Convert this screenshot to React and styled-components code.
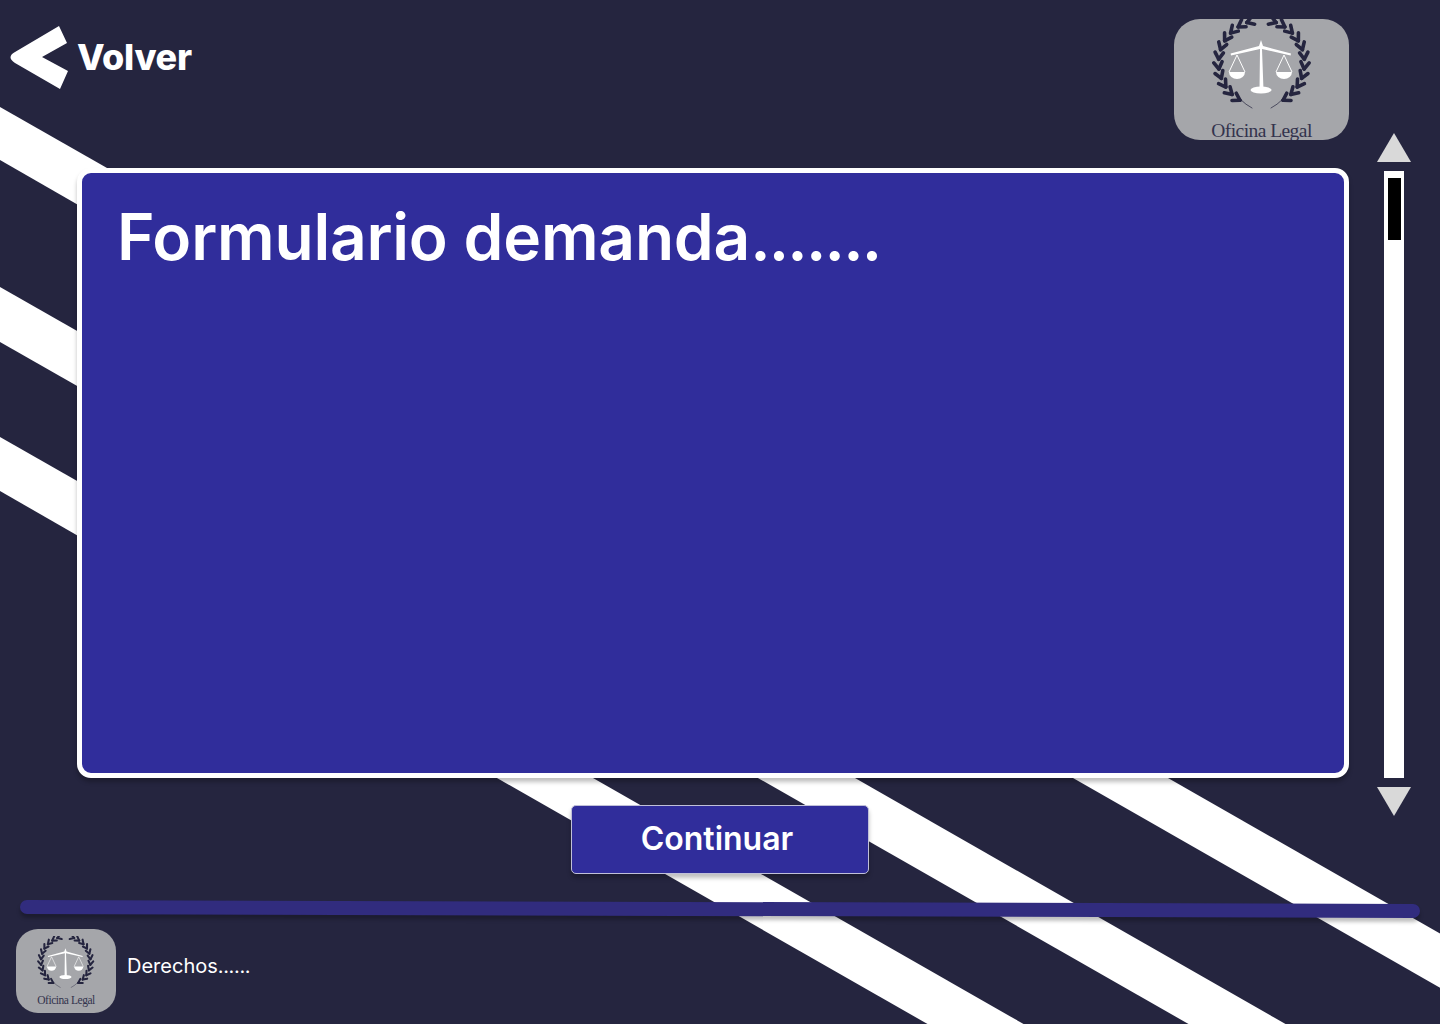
import styled, { createGlobalStyle } from 'styled-components'

const GlobalStyle = createGlobalStyle`
  * {
    box-sizing: border-box;
    margin: 0;
    padding: 0;
  }

  body {
    background: #25253f;
    font-family: Inter, "Liberation Sans", sans-serif;
    color: #fff;
  }
`

const Page = styled.div`
  position: relative;
  width: 1440px;
  height: 1024px;
  overflow: hidden;
  background: #25253f;
`

const Stripes = styled.svg`
  position: absolute;
  inset: 0;
  width: 1440px;
  height: 1024px;
`

const Content = styled.div`
  position: relative;
  display: flex;
  flex-direction: column;
`

const MainRow = styled.div`
  display: flex;
`

const LeftColumn = styled.div`
  width: 1349px;
  display: flex;
  flex-direction: column;
`

const TopBar = styled.header`
  height: 168px;
  padding-top: 19px;
  padding-left: 10px;
  display: flex;
  justify-content: space-between;
  align-items: flex-start;
`

const BackLink = styled.a`
  margin-top: 6px;
  display: flex;
  align-items: center;
  gap: 9px;
  color: #fff;
  cursor: pointer;
`

const BackLabel = styled.span`
  font-size: 36px;
  font-weight: 800;
  line-height: 44px;
  letter-spacing: -0.3px;
`

const LogoCard = styled.div`
  width: ${(p) => (p.$small ? '100px' : '175px')};
  height: ${(p) => (p.$small ? '84px' : '121px')};
  padding-top: ${(p) => (p.$small ? '7px' : '0')};
  border-radius: ${(p) => (p.$small ? '22px' : '26px')};
  background: #a5a6aa;
  display: flex;
  flex-direction: column;
  align-items: center;
  overflow: hidden;
  flex-shrink: 0;
`

const LogoEmblem = styled.svg`
  width: ${(p) => (p.$small ? '58px' : '100px')};
  height: ${(p) => (p.$small ? '52px' : '90px')};
  flex-shrink: 0;
`

const LogoText = styled.span`
  margin-top: ${(p) => (p.$small ? '7px' : '12px')};
  font-family: "Liberation Serif", serif;
  font-size: ${(p) => (p.$small ? '11.5px' : '19.5px')};
  letter-spacing: ${(p) => (p.$small ? '-0.45px' : '-0.55px')};
  line-height: 1;
  white-space: nowrap;
  color: #33334d;
`

const Panel = styled.section`
  margin-left: 77px;
  width: 1272px;
  height: 610px;
  padding: 25px 35px;
  background: #302d9b;
  border: 5px solid #fff;
  border-radius: 14px;
  box-shadow: 0 4px 4px rgba(0, 0, 0, 0.25);
`

const Title = styled.h1`
  font-size: 64px;
  font-weight: 600;
  line-height: 77px;
  letter-spacing: -0.2px;
`

const Dots = styled.span`
  letter-spacing: ${(p) => p.$spacing};
`

const ButtonRow = styled.div`
  padding-left: 571px;
  margin-top: 27px;
`

const ContinueButton = styled.button`
  width: 298px;
  height: 69px;
  padding-right: 6px;
  padding-bottom: 2px;
  background: #302d9b;
  border: 1px solid #c0c0d8;
  border-radius: 5px;
  box-shadow: 0 4px 4px rgba(0, 0, 0, 0.25);
  color: #fff;
  font-family: inherit;
  font-size: 32px;
  font-weight: 600;
  cursor: pointer;
`

const Scroller = styled.div`
  margin-top: 133px;
  margin-left: 28px;
  width: 34px;
  display: flex;
  flex-direction: column;
  align-items: center;
`

const Arrow = styled.button`
  width: 34px;
  height: 29px;
  border: none;
  background: #d9d9d9;
  clip-path: ${(p) =>
    p.$down ? 'polygon(0 0, 100% 0, 50% 100%)' : 'polygon(50% 0, 100% 100%, 0 100%)'};
`

const Track = styled.div`
  width: 20px;
  height: 607px;
  margin: 9px 0;
  padding: 7px 3px 0 4px;
  background: #fff;
`

const Thumb = styled.div`
  height: 62px;
  background: #000;
`

const Divider = styled.div`
  margin: 28px 20px 0;
  height: 14px;
  border-radius: 8px;
  background: #312c7e;
  box-shadow: 0 4px 4px rgba(0, 0, 0, 0.25);
  transform: rotate(0.164deg);
`

const Footer = styled.footer`
  margin-top: 13px;
  padding-left: 16px;
  display: flex;
  align-items: center;
  gap: 11px;
`

const FooterText = styled.p`
  margin-bottom: 10px;
  font-size: 20px;
  line-height: 24px;
`

const stripes = [
  '0,107 200,221 200,275 0,160',
  '0,287 200,401 200,456 0,342',
  '0,437 200,551 200,606 0,491',
  '483,770 579,770 1034,1030 938,1030',
  '744,770 841,770 1296,1030 1199,1030',
  '1059,770 1154,770 1609,1030 1514,1030',
]

// laurel branch: pairs of leaves along an arc round the scale
const leaves = Array.from({ length: 11 }, (_, i) => {
  const rad = ((150 - i * 13) * Math.PI) / 180
  const x = 49.5 - 43 * Math.sin(rad)
  const y = 44 - 43 * Math.cos(rad)
  const tx = Math.cos(rad)
  const ty = -Math.sin(rad)
  const ends = [0.55, -0.55].map((a) => [
    x + (tx * Math.cos(a) - ty * Math.sin(a)) * 8,
    y + (tx * Math.sin(a) + ty * Math.cos(a)) * 8,
  ])
  return { x, y, ends }
})

function Branch() {
  return (
    <g stroke="#25253f" strokeLinecap="round" fill="none">
      {leaves.map((leaf, i) => (
        <g key={i} strokeWidth="3.6">
          <line x1={leaf.x} y1={leaf.y} x2={leaf.ends[0][0]} y2={leaf.ends[0][1]} />
          <line x1={leaf.x} y1={leaf.y} x2={leaf.ends[1][0]} y2={leaf.ends[1][1]} />
        </g>
      ))}
      <path d="M28 80 Q34 86 40 89" strokeWidth="0.7" />
    </g>
  )
}

function Logo({ small }) {
  return (
    <LogoCard $small={small}>
      <LogoEmblem $small={small} viewBox="0 0 100 90">
        <Branch />
        <g transform="translate(99 0) scale(-1 1)">
          <Branch />
        </g>
        <g fill="#fff">
          <path d="M47.5 71 L48 30 L19 36.5 L18.6 34.6 L47 27 L49 21 L51 27 L79 34.6 L78.6 36.5 L50 30 L51.5 71 Z" />
          <ellipse cx="49" cy="71" rx="10.5" ry="3.5" />
          <path d="M17 53 H33 A8 7 0 0 1 17 53 Z" />
          <path d="M64 53 H80 A8 7 0 0 1 64 53 Z" />
        </g>
        <g stroke="#fff" strokeWidth="1" fill="none">
          <path d="M17 53 L25 36 L33 53" />
          <path d="M64 53 L72 36 L80 53" />
        </g>
      </LogoEmblem>
      <LogoText $small={small}>Oficina Legal</LogoText>
    </LogoCard>
  )
}

function App() {
  return (
    <>
      <GlobalStyle />
      <Page>
        <Stripes viewBox="0 0 1440 1024">
          {stripes.map((points) => (
            <polygon key={points} points={points} fill="#fff" />
          ))}
        </Stripes>
        <Content>
          <MainRow>
            <LeftColumn>
              <TopBar>
                <BackLink>
                  <svg width="58" height="64" viewBox="10 26 58 64">
                    <path d="M59 27 L67 44 L42 58 L68 72 L60 90 L15 64 Q6 58 15 53 Z" fill="#fff" />
                  </svg>
                  <BackLabel>Volver</BackLabel>
                </BackLink>
                <Logo />
              </TopBar>
              <Panel>
                <Title>
                  Formulario demanda<Dots $spacing="-1.8px">.......</Dots>
                </Title>
              </Panel>
              <ButtonRow>
                <ContinueButton>Continuar</ContinueButton>
              </ButtonRow>
            </LeftColumn>
            <Scroller>
              <Arrow aria-label="Subir" />
              <Track>
                <Thumb />
              </Track>
              <Arrow $down aria-label="Bajar" />
            </Scroller>
          </MainRow>
          <Divider />
          <Footer>
            <Logo small />
            <FooterText>
              Derechos<Dots $spacing="-0.35px">......</Dots>
            </FooterText>
          </Footer>
        </Content>
      </Page>
    </>
  )
}

export default App
